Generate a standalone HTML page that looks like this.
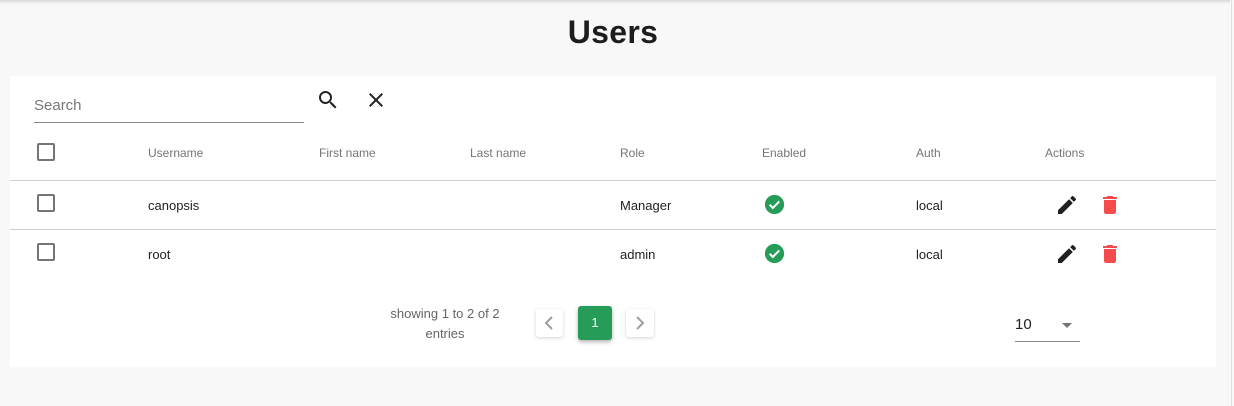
<!DOCTYPE html>
<html><head><meta charset="utf-8"><style>
*{margin:0;padding:0;box-sizing:border-box}
body{width:1234px;height:406px;background:#f8f8f8;font-family:"Liberation Sans",Arial,sans-serif;position:relative;overflow:hidden;color:#212121}
.topsh{position:absolute;left:0;top:0;width:1230px;height:4px;background:linear-gradient(#d8d8d8,#f8f8f8)}
.vline{position:absolute;left:1231px;top:0;width:1px;height:406px;background:#e0e0e0}
h1{position:absolute;left:0;width:1226px;top:14px;text-align:center;font-size:32px;font-weight:bold;color:#1d1d1d;letter-spacing:0.3px}
.card{position:absolute;left:10px;top:76px;width:1206px;height:291px;background:#fff}
.a{position:absolute}
.hdr{font-size:12px;color:#757575}
.cell{font-size:13px;color:#212121}
.cb{position:absolute;width:18px;height:18px;border:2px solid #757575;border-radius:2px}
.hr{position:absolute;left:0;width:1206px;height:1px;background:#cfcfcf}
.pb{position:absolute;background:#fff;border-radius:3px;box-shadow:0 1px 3px rgba(0,0,0,.18)}
</style></head><body>
<div class="topsh"></div><div class="vline"></div>
<h1>Users</h1>
<div class="card">
  <div class="a" style="left:24px;top:21px;font-size:15px;color:#777">Search</div>
  <div class="a" style="left:24px;top:46px;width:270px;height:1px;background:#8a8a8a"></div>
  <svg class="a" style="left:306px;top:12px" width="24" height="24" viewBox="0 0 24 24"><path fill="#212121" d="M15.5 14h-.79l-.28-.27A6.47 6.47 0 0 0 16 9.5 6.5 6.5 0 1 0 9.5 16c1.61 0 3.09-.59 4.23-1.57l.27.28v.79l5 4.99L20.49 19l-4.99-5zm-6 0C7.01 14 5 11.99 5 9.5S7.01 5 9.5 5 14 7.01 14 9.5 11.99 14 9.5 14z"/></svg>
  <svg class="a" style="left:354px;top:12px" width="24" height="24" viewBox="0 0 24 24"><path fill="#212121" d="M19 6.41 17.59 5 12 10.59 6.41 5 5 6.41 10.59 12 5 17.59 6.41 19 12 13.41 17.59 19 19 17.59 13.41 12z"/></svg>

  <div class="cb" style="left:27px;top:67px"></div>
  <div class="a hdr" style="left:138px;top:70px">Username</div>
  <div class="a hdr" style="left:309px;top:70px">First name</div>
  <div class="a hdr" style="left:460px;top:70px">Last name</div>
  <div class="a hdr" style="left:610px;top:70px">Role</div>
  <div class="a hdr" style="left:752px;top:70px">Enabled</div>
  <div class="a hdr" style="left:906px;top:70px">Auth</div>
  <div class="a hdr" style="left:1035px;top:70px">Actions</div>
  <div class="hr" style="top:104px"></div>

  <div class="cb" style="left:27px;top:118px"></div>
  <div class="a cell" style="left:138px;top:122px">canopsis</div>
  <div class="a cell" style="left:610px;top:122px">Manager</div>
  <svg class="a" style="left:754px;top:118px" width="21" height="21" viewBox="0 0 24 24"><circle cx="12" cy="12" r="11" fill="#279c58"/><path d="M6.5 12.3l3.6 3.6 7.4-7.4" stroke="#fff" stroke-width="2.3" fill="none"/></svg>
  <div class="a cell" style="left:906px;top:122px">local</div>
  <svg class="a" style="left:1045px;top:117px" width="24" height="24" viewBox="0 0 24 24"><path fill="#212121" d="M3 17.25V21h3.75L17.81 9.94l-3.75-3.75L3 17.25zM20.71 7.04a1 1 0 0 0 0-1.41l-2.34-2.34a1 1 0 0 0-1.41 0l-1.83 1.83 3.75 3.75 1.83-1.83z"/></svg>
  <svg class="a" style="left:1088px;top:117px" width="24" height="24" viewBox="0 0 24 24"><path fill="#f44c4c" d="M6 19c0 1.1.9 2 2 2h8c1.1 0 2-.9 2-2V7H6v12zM19 4h-3.5l-1-1h-5l-1 1H5v2h14V4z"/></svg>
  <div class="hr" style="top:153px"></div>

  <div class="cb" style="left:27px;top:167px"></div>
  <div class="a cell" style="left:138px;top:171px">root</div>
  <div class="a cell" style="left:610px;top:171px">admin</div>
  <svg class="a" style="left:754px;top:167px" width="21" height="21" viewBox="0 0 24 24"><circle cx="12" cy="12" r="11" fill="#279c58"/><path d="M6.5 12.3l3.6 3.6 7.4-7.4" stroke="#fff" stroke-width="2.3" fill="none"/></svg>
  <div class="a cell" style="left:906px;top:171px">local</div>
  <svg class="a" style="left:1045px;top:166px" width="24" height="24" viewBox="0 0 24 24"><path fill="#212121" d="M3 17.25V21h3.75L17.81 9.94l-3.75-3.75L3 17.25zM20.71 7.04a1 1 0 0 0 0-1.41l-2.34-2.34a1 1 0 0 0-1.41 0l-1.83 1.83 3.75 3.75 1.83-1.83z"/></svg>
  <svg class="a" style="left:1088px;top:166px" width="24" height="24" viewBox="0 0 24 24"><path fill="#f44c4c" d="M6 19c0 1.1.9 2 2 2h8c1.1 0 2-.9 2-2V7H6v12zM19 4h-3.5l-1-1h-5l-1 1H5v2h14V4z"/></svg>

  <div class="a" style="left:368px;top:228px;width:134px;text-align:center;font-size:13px;line-height:20px;color:#666">showing 1 to 2 of 2 entries</div>
  <div class="pb" style="left:526px;top:233px;width:27px;height:28px"><svg width="27" height="28" viewBox="0 0 27 28"><path d="M16 8l-6 6 6 6" stroke="#9e9e9e" stroke-width="2" fill="none"/></svg></div>
  <div class="pb" style="left:568px;top:230px;width:34px;height:34px;background:#279c58;box-shadow:0 2px 4px rgba(0,0,0,.3);color:#fff;font-size:13px;text-align:center;line-height:34px">1</div>
  <div class="pb" style="left:616px;top:233px;width:28px;height:28px"><svg width="28" height="28" viewBox="0 0 28 28"><path d="M11 8l6 6-6 6" stroke="#9e9e9e" stroke-width="2" fill="none"/></svg></div>

  <div class="a" style="left:1005px;top:240px;font-size:15px;color:#212121">10</div>
  <div class="a" style="left:1052px;top:247px;width:0;height:0;border-left:5px solid transparent;border-right:5px solid transparent;border-top:5px solid #757575"></div>
  <div class="a" style="left:1005px;top:265px;width:65px;height:1px;background:#8a8a8a"></div>
</div>
</body></html>
